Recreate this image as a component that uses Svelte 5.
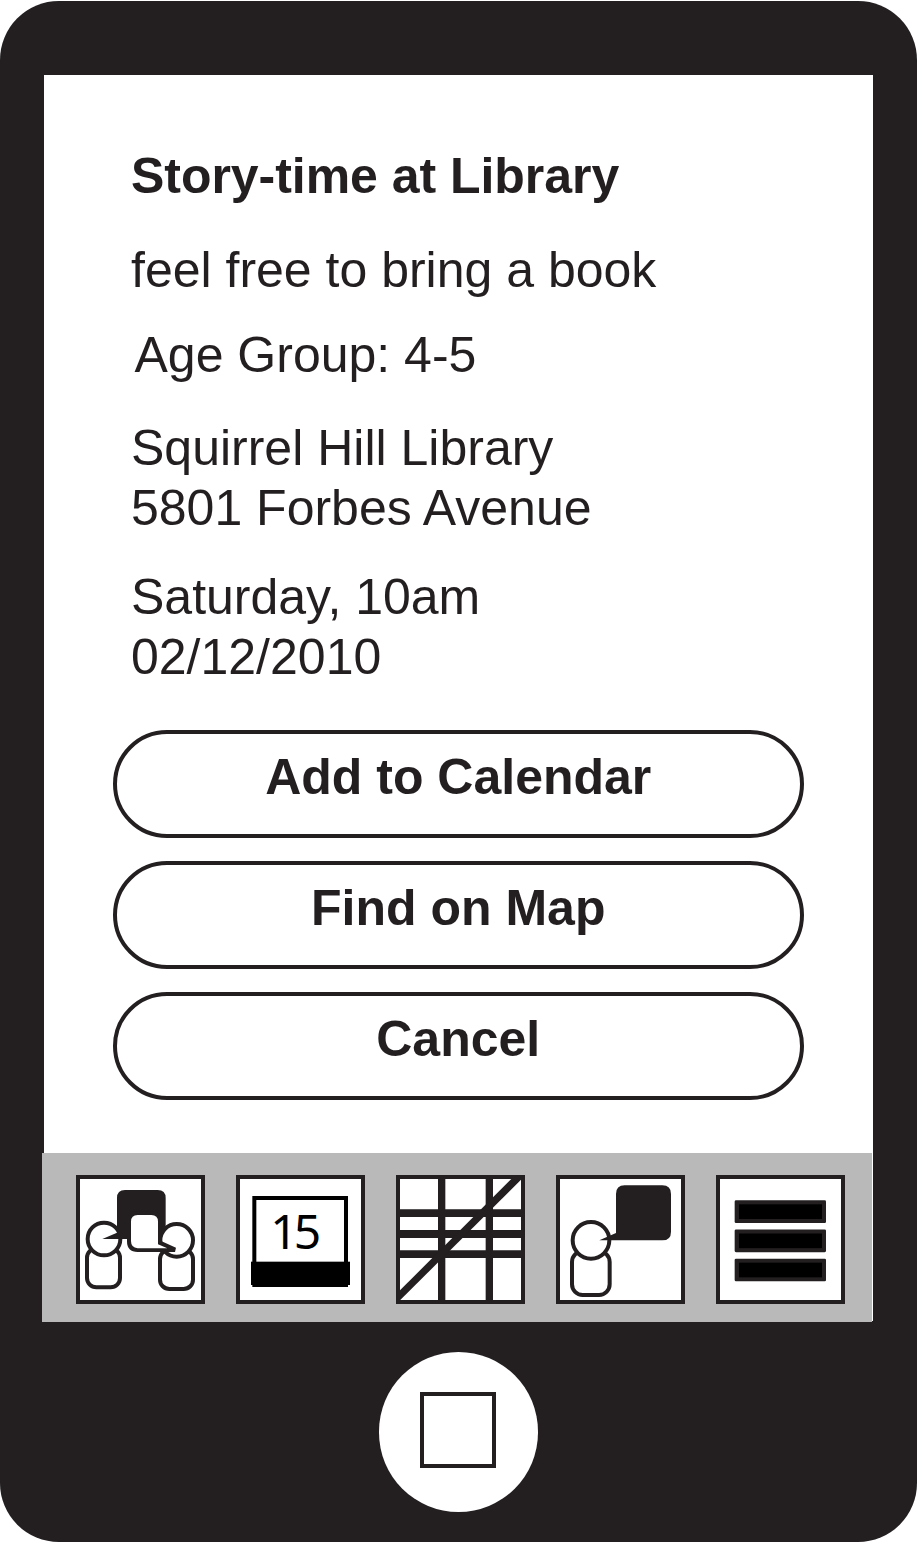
<script>
  const actions = ['Add to Calendar', 'Find on Map', 'Cancel'];
</script>

<div class="phone">
  <main class="screen">
    <section class="details">
      <h1>Story-time at Library</h1>
      <p class="note">feel free to bring a book</p>
      <p class="age">Age Group: 4-5</p>
      <p class="place">Squirrel Hill Library<br />5801 Forbes Avenue</p>
      <p class="time">Saturday, 10am<br />02/12/2010</p>
    </section>
    <div class="actions">
      {#each actions as label}
        <button>{label}</button>
      {/each}
    </div>
  </main>

  <nav class="tabs">
    <svg class="tile" viewBox="18 21 387 387" aria-label="Groups">
      <rect class="frame" x="24" y="27" width="375" height="375" />
      <rect class="line" x="51" y="241" width="99" height="117" rx="28" />
      <circle class="line" cx="102" cy="213" r="49" />
      <rect class="line" x="270" y="245" width="99" height="118" rx="28" />
      <path class="ink" d="M165 66H263Q287 66 287 90V213H97L141 194V90Q141 66 165 66Z" />
      <circle class="line" cx="320" cy="217" r="49" />
      <path class="ink" d="M203 130H244Q275 130 275 161V220L318 239L315 252H203Q171 252 171 220V161Q171 130 203 130Z" />
      <path fill="#fff" d="M203 141H244Q264 141 264 161V229L292 241H203Q183 239 183 219V161Q183 141 203 141Z" />
    </svg>
    <svg class="tile" viewBox="18 21 387 387" aria-label="Calendar">
      <rect class="frame" x="24" y="27" width="375" height="375" />
      <rect x="73" y="90" width="275" height="261" fill="#fff" stroke="#000" stroke-width="12" />
      <rect x="63" y="281" width="297" height="70" />
      <text x="121" y="243">15</text>
    </svg>
    <svg class="tile" viewBox="18 21 387 387" aria-label="Map">
      <rect class="frame" x="24" y="27" width="375" height="375" />
      <path class="ink" d="M144 27h22v375h-22zM287 27h22v375h-22zM24 124h375v23H24zM24 186h375v24H24zM24 247h375v23H24z" />
      <path class="ink" d="M24 373L370 27H399V29L24 403Z" />
    </svg>
    <svg class="tile" viewBox="18 21 387 387" aria-label="Messages">
      <rect class="frame" x="24" y="27" width="375" height="375" />
      <rect class="line" x="66" y="250" width="113" height="131" rx="32" />
      <circle class="line" cx="123" cy="217" r="55" />
      <path class="ink" d="M224 52H337Q363 52 363 78V191Q363 217 337 217H148L198 195V78Q198 52 224 52Z" />
    </svg>
    <svg class="tile" viewBox="18 21 387 387" aria-label="Menu">
      <rect class="frame" x="24" y="27" width="375" height="375" />
      {#each [97, 184.5, 272] as y}
        <rect class="ink" x="74" {y} width="274" height="68" rx="4" />
        <rect x="87" y={y + 12} width="249" height="44" />
      {/each}
    </svg>
  </nav>

  <footer><div class="home"><i></i></div></footer>
</div>

<style>
  :global(body) { background: #fff; }
  .phone {
    box-sizing: border-box;
    width: 917px;
    height: 1541px;
    margin-top: 1px;
    padding: 74px 44px 0 43.5px;
    border-radius: 59px;
    background: #231f20;
    color: #231f20;
    font-family: "Liberation Sans", Arial, sans-serif;
    font-size: 50px;
    line-height: 60px;
    display: flex;
    flex-direction: column;
  }
  .screen {
    box-sizing: border-box;
    height: 1246px;
    background: #fff;
    padding: 71px 69px 0 69.5px;
    flex: none;
  }
  .details { padding-left: 18px; height: 584px; white-space: nowrap; }
  h1, p { margin: 0; }
  h1 { font-size: inherit; font-weight: bold; letter-spacing: -0.04px; }
  .note { margin-top: 34px; }
  .age { margin-top: 25px; padding-left: 3.5px; }
  .place { margin-top: 33px; }
  .time { margin-top: 29px; }
  .actions { display: flex; flex-direction: column; gap: 23px; }
  button {
    box-sizing: border-box;
    height: 108px;
    width: 690.5px;
    padding: 0 0 14px;
    border: 4px solid #231f20;
    border-radius: 54px;
    background: #fff;
    color: inherit;
    font: bold 50px/60px "Liberation Sans", Arial, sans-serif;
  }
  .tabs {
    flex: none;
    box-sizing: border-box;
    width: 829.5px;
    height: 169px;
    margin: -168.5px 0 0 -1.5px;
    padding: 22.5px 0 0 34px;
    display: flex;
    gap: 31px;
    background: #b9b9b9;
  }
  .tile { width: 129px; height: 129px; flex: none; }
  .frame { fill: #fff; stroke: #231f20; stroke-width: 12; }
  .line { fill: #fff; stroke: #231f20; stroke-width: 12; }
  .ink { fill: #231f20; }
  text { font: 144px "Noto Sans", sans-serif; letter-spacing: -12px; }
  footer { display: flex; justify-content: center; padding-top: 30.5px; }
  .home {
    box-sizing: border-box;
    width: 159.5px;
    height: 159.5px;
    padding-bottom: 3px;
    border-radius: 50%;
    background: #fff;
    display: grid;
    place-items: center;
  }
  .home i { width: 68px; height: 68px; border: 4px solid #231f20; }
</style>
